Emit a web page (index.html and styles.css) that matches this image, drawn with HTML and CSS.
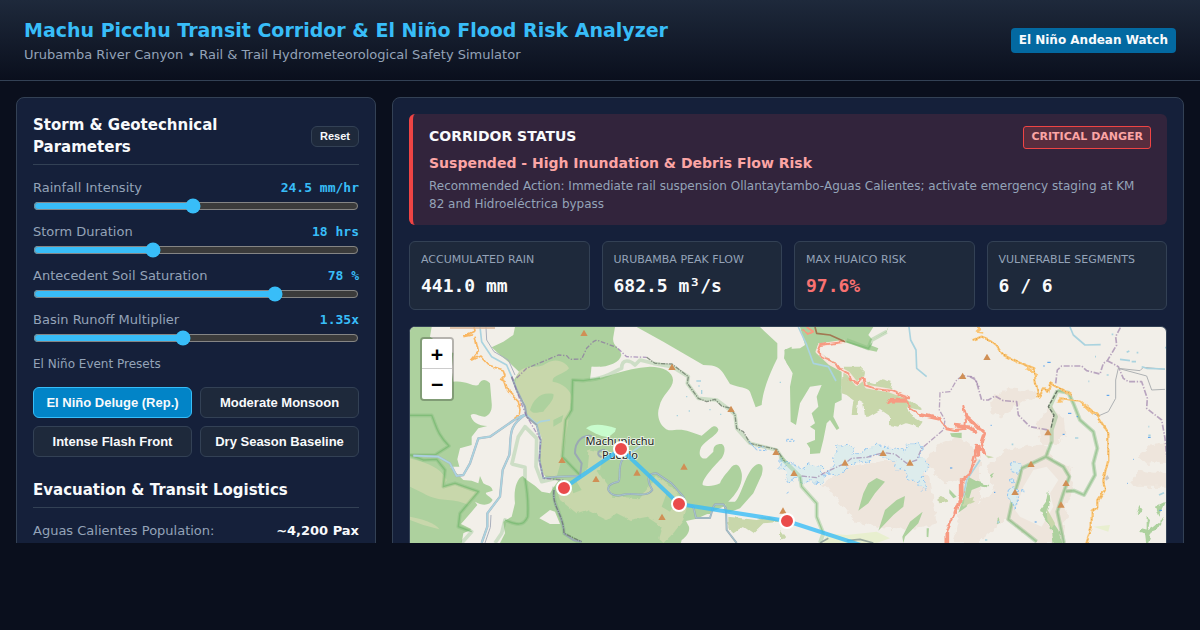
FILE: index.html
```html
<!DOCTYPE html>
<html lang="en">
<head>
<meta charset="utf-8">
<meta name="viewport" content="width=device-width, initial-scale=1">
<title>Machu Picchu Transit Corridor &amp; El Niño Flood Risk Analyzer</title>
<link rel="stylesheet" href="styles.css">
</head>
<body>
<header class="header">
  <div>
    <h1 class="title">Machu Picchu Transit Corridor &amp; El Niño Flood Risk Analyzer</h1>
    <p class="subtitle">Urubamba River Canyon • Rail &amp; Trail Hydrometeorological Safety Simulator</p>
  </div>
  <span class="watch">El Niño Andean Watch</span>
</header>
<main class="main">
  <section class="panel">
    <div class="panel-head">
      <h2 class="heading">Storm &amp; Geotechnical Parameters</h2>
      <button class="btn btn-small" type="button">Reset</button>
    </div>
    <div class="field">
      <div class="field-top"><label for="rain">Rainfall Intensity</label><output class="value" for="rain">24.5 mm/hr</output></div>
      <input class="slider" id="rain" type="range" min="0" max="50" step="0.5" value="24.5">
    </div>
    <div class="field">
      <div class="field-top"><label for="duration">Storm Duration</label><output class="value" for="duration">18 hrs</output></div>
      <input class="slider" id="duration" type="range" min="1" max="48" value="18">
    </div>
    <div class="field">
      <div class="field-top"><label for="soil">Antecedent Soil Saturation</label><output class="value" for="soil">78 %</output></div>
      <input class="slider" id="soil" type="range" min="10" max="100" value="78">
    </div>
    <div class="field">
      <div class="field-top"><label for="runoff">Basin Runoff Multiplier</label><output class="value" for="runoff">1.35x</output></div>
      <input class="slider" id="runoff" type="range" min="0.8" max="2" step="0.05" value="1.35">
    </div>
    <p class="preset-label">El Niño Event Presets</p>
    <div class="presets">
      <button class="btn btn-active" type="button">El Niño Deluge (Rep.)</button>
      <button class="btn" type="button">Moderate Monsoon</button>
      <button class="btn" type="button">Intense Flash Front</button>
      <button class="btn" type="button">Dry Season Baseline</button>
    </div>
    <div class="panel-head">
      <h2 class="heading">Evacuation &amp; Transit Logistics</h2>
    </div>
    <div class="fact"><span>Aguas Calientes Population:</span><strong class="fact-value">~4,200 Pax</strong></div>
  </section>

  <section class="panel">
    <div class="alert">
      <div class="alert-top"><h2 class="alert-label">CORRIDOR STATUS</h2><span class="danger">CRITICAL DANGER</span></div>
      <p class="alert-title">Suspended - High Inundation &amp; Debris Flow Risk</p>
      <p class="alert-text">Recommended Action: Immediate rail suspension Ollantaytambo-Aguas Calientes; activate emergency staging at KM 82 and Hidroeléctrica bypass</p>
    </div>
    <div class="stats">
      <div class="stat"><div class="stat-label">ACCUMULATED RAIN</div><div class="stat-value">441.0 mm</div></div>
      <div class="stat"><div class="stat-label">URUBAMBA PEAK FLOW</div><div class="stat-value">682.5 m³/s</div></div>
      <div class="stat"><div class="stat-label">MAX HUAICO RISK</div><div class="stat-value stat-high">97.6%</div></div>
      <div class="stat"><div class="stat-label">VULNERABLE SEGMENTS</div><div class="stat-value">6 / 6</div></div>
    </div>
    <div class="map">
      <svg class="map-art" viewBox="410 327 756 350" role="img" aria-label="Corridor map">
        <defs>
          <path id="peak" d="M0-11 11 8H-11Z" fill="#d08f55"/>
          <filter id="rough" x="-5%" y="-5%" width="110%" height="110%"><feTurbulence type="fractalNoise" baseFrequency=".05" numOctaves="2" seed="4"/><feDisplacementMap in="SourceGraphic" scale="28" xChannelSelector="R" yChannelSelector="G"/></filter>
          <filter id="wobble" x="-5%" y="-5%" width="110%" height="110%"><feTurbulence type="fractalNoise" baseFrequency=".04" numOctaves="2" seed="8"/><feDisplacementMap in="SourceGraphic" scale="14" xChannelSelector="R" yChannelSelector="G"/></filter>
        </defs>
        <g transform="translate(400 320) scale(.33333)" fill="none" stroke-linejoin="round">
          <!-- western canyon -->
          <path fill="#add19e" d="M0 0H1250V1100H0Z"/>
          <g>
            <path fill="#c8d7ab" d="M355 155C390 130 410 150 440 130 470 110 500 130 507 145 490 165 455 165 458 185 490 190 520 215 514 240L490 400 470 470 425 465 420 360 385 290 345 190ZM30 415C80 430 120 440 140 480L130 500 165 490 235 515 205 555C150 530 120 550 70 520L30 500ZM30 590C90 600 115 620 118 628L70 615 30 600Z"/>
            <path filter="url(#wobble)" fill="#c8d7ab" d="M470 510 530 480 570 440 590 450 625 500 640 530 720 535 770 470 815 500 860 560 850 600 820 640 790 669 775 655 785 620 740 590 690 600 650 580 620 600 560 570 530 580 480 540ZM565 390 610 400 600 450 560 450Z"/>
            <path fill="#add19e" d="M390 270C400 240 420 215 460 222 465 240 440 260 430 275 415 275 400 285 390 270ZM460 300 490 285 485 305 460 320ZM510 490 530 485 545 510 520 520ZM800 520 830 540 810 575 785 560Z"/>
            <path fill="#f2efe9" d="M95 21H345L340 45 310 65 275 82 300 105 330 130 357 155 342 180 350 210 372 245 380 285 410 310 425 355 417 400 425 455 440 475 475 482 462 500 450 520 425 515 405 497 380 480 368 468C350 475 340 510 345 550L335 590 310 605 315 640 300 669H185L190 640 215 628 183 612 215 575 232 555 225 545C250 560 270 555 278 540 270 528 255 525 258 518L278 512C275 495 260 498 250 490L240 468 235 490 215 482 190 480 150 440 178 440 172 418 180 385 215 375 215 350 235 325 262 318C235 318 215 305 212 285 225 275 240 292 255 290 270 285 277 270 275 250L270 190C250 170 240 185 235 195 220 202 200 180 160 185L155 150 160 100 90 50ZM418 595 450 570 465 575 480 612 450 612ZM575 140H600V170L575 165Z"/>
            <path fill="#f2efe9" transform="translate(570)" d="M75 21H140L220 65 340 135C380 135 390 145 400 160L420 192C450 205 470 200 480 215L497 262 515 255C518 220 530 180 562 115V70L510 21H720V700H265L275 660C290 650 300 635 297 620L288 603 320 596 400 560 415 545C440 520 460 490 455 460 450 430 435 430 425 440 405 465 395 475 390 490 370 500 350 500 338 495 335 480 370 440 395 415 408 395 405 375 395 372 375 372 370 380 370 395L350 415C330 420 325 400 332 385 340 365 385 345 385 328 380 315 370 318 365 322L335 347 300 335C260 320 240 340 225 325 205 310 200 280 208 260 215 225 250 205 249 180 248 155 220 140 180 140 100 145 50 175 0 178L5 140C45 145 90 130 94 105 90 80 65 80 70 50Z"/>
            <path fill="#add19e" transform="translate(570)" d="M410 545 435 545C455 530 470 440 505 432 520 432 520 445 515 465L490 520 450 565 415 578 400 570ZM583 90 605 80V150L590 130ZM313 560 365 560 360 582 325 583Z"/>
            <path filter="url(#wobble)" fill="#c8d7ab" d="M985 590 1070 600 1110 590 1140 605 1090 610 1060 640 1030 620 1000 640 985 625Z"/>
            <path fill="#c8fccd" d="M558 325C575 310 610 312 648 325L645 335 625 352 605 348 585 340Z"/>
          </g>
          <!-- parkland edges -->
          <path stroke="#6fb56a" stroke-opacity=".28" stroke-width="11" d="M30 286H95C110 320 110 340 147 378L105 405 30 405 70 420 110 418 135 450 130 500 165 490 235 515 180 580 175 620 215 635 185 669M335 435 355 350 375 320 410 355 408 440 425 485 470 475M335 432 375 442 375 475C385 530 385 560 383 590 370 620 350 615 315 600L305 640 285 669M600 174 550 182 518 180 515 270 497 300 487 410 540 465M570 180C620 175 650 150 665 145 665 115 690 120 705 135L720 120 760 130 816 140 865 170 862 190 895 235 950 240 990 270 1005 285 1010 325 1050 370 1130 390 1165 440M462 500C455 560 490 580 492 640L540 669"/>
          <path stroke="#6fb56a" stroke-opacity=".6" stroke-width="4" d="M30 286H95C110 320 110 340 147 378L105 405 30 405 70 420 110 418 135 450 130 500 165 490 235 515 180 580 175 620 215 635M600 174 550 182 518 180 515 270 497 300 487 410 540 465M375 475C385 530 385 560 383 590 370 620 350 615 315 600"/>
          <!-- rivers and railway -->
          <path stroke="#aab0bd" stroke-width="7" d="M378 283 350 295 270 350 235 355 210 430 190 465 170 468 150 430 115 410 40 407M378 283C320 320 335 350 328 405L308 450 300 530 262 580 262 620 245 669"/>
          <path stroke="#aab0bd" stroke-width="3" d="M258 21 260 60 282 95 325 120 345 165M273 585 271 622 255 669"/>
          <path stroke="#aad3df" stroke-width="5" d="M240 21 245 65 275 110 320 135 335 170 350 210 375 260 378 283 410 312M378 283 350 295 270 350 235 355 210 430 190 465 170 468 150 430 115 410 40 407M378 283C320 320 335 350 328 405L308 450 300 530 262 580 262 620 245 669M410 312 420 305 450 300M690 400 725 375"/>
          <path stroke="#9aa9b3" stroke-width="6" d="M335 170 350 210 375 260 380 290 410 315 422 360 418 420 430 475 470 470 540 468 545 430 525 400C525 360 550 345 575 348M615 390C590 390 590 405 605 412M670 415C650 440 665 475 655 485 600 495 630 535 665 525 700 515 740 535 757 510 740 480 740 460 770 460L815 490 850 530 860 555 880 560 888 594 930 594 940 560 945 553H970L978 565 980 630 1010 669M462 510C455 560 490 580 492 640L520 660 545 665"/>
          <path stroke="#aad3df" stroke-width="2" d="M670 415C650 440 665 475 655 485 600 495 630 535 665 525 700 515 740 535 757 510 740 480 740 460 770 460L815 490 850 530 860 555 880 560 888 594 930 594 940 560 945 553H970L978 565 980 630 1010 669M410 315 422 360 418 420 430 475 470 470 540 468"/>
          <path stroke="#8461a2" stroke-opacity=".6" stroke-width="4" stroke-dasharray="14 5 4 5" d="M335 170 360 240 378 285 422 360 418 420 430 475 490 480M350 174 380 145 440 120 475 105 500 107 510 118 545 117 560 85 580 65 590 60 650 82 680 110 740 112"/>
          <path stroke="#687566" stroke-opacity=".75" stroke-width="4" stroke-dasharray="14 3 4 3" d="M740 112 765 130 816 132 865 170 862 190 895 235 920 245 945 238 965 258 993 265 1005 285 1010 325 1030 335 1050 370 1130 388 1160 435 1185 460M462 510C455 560 490 580 492 640L545 665"/>
          <path filter="url(#wobble)" stroke="#f9b763" stroke-width="5" d="M190 50 215 45 192 48 225 32 222 21M225 50 235 95 215 120 240 108 265 135 310 150 315 165 302 178 315 185 325 215 355 245 360 270 358 285 340 292"/>
          <path stroke="#d9b596" stroke-width="5" d="M150 24H285"/>

          <!-- central highlands -->
          <g transform="translate(1140)">
            <path filter="url(#rough)" fill="#eee5dc" d="M130 490 190 440 270 430 330 420 390 440 450 470 470 610 380 630 310 625 220 600 180 550ZM430 430 480 370 540 350 600 400V669H520L560 480 500 490Z"/>
            <path fill="#add19e" d="M60 21H325L320 35 275 60 270 75 295 85 290 95 265 90 200 68 115 70 110 90 185 145 185 240 165 250 160 290 178 325 170 330 150 300 140 310 130 360 120 400 90 402 90 385 80 370 105 360 105 330 90 320 105 310 95 280 115 260 110 230 125 195 90 200 60 250 48 315 32 305 30 200 38 160 12 115 15 88 60 85 75 75ZM290 474 315 485 285 520 265 550 235 572 250 520 265 490ZM375 528 370 560 340 585 295 632 315 570 350 540ZM428 575 415 610 375 650 370 669 367 650 390 605ZM510 340 545 338 545 355 515 350ZM508 508 530 530 520 535 508 520ZM565 470 600 490 600 500 575 510 560 560 535 578 555 520ZM440 625 447 625 445 652 440 650Z"/>
            <path fill="#f2efe9" d="M280 21 325 21 318 35 278 60 265 45Z"/>
            <path filter="url(#wobble)" fill="#c8d7ab" d="M188 140 240 140 255 155 250 180 285 190 305 178 335 185 330 210 380 235 425 265 420 270 380 260 390 285 425 305 415 320 380 310 355 320 330 315 330 290 300 270 265 290 255 290 250 250 235 240 230 285 215 285 220 240 200 225 185 220ZM468 540 485 525 505 545 480 550ZM555 525 585 545 550 560ZM0 630 15 650 0 660Z"/>
            <path fill="#e8efcf" d="M140 640 200 645 290 635 330 655 290 669H130Z"/>
            <path filter="url(#rough)" fill="#ddecec" stroke="#91c5f2" stroke-width="3" stroke-dasharray="9 6" d="M0 415 30 430 65 445 85 432 120 435 130 460 155 455 165 430 158 410 172 400 168 380 205 370 218 385 215 405 240 400 270 385 290 372 305 378 350 385 370 395 385 375 415 368 425 390 420 410 450 435 432 460 430 470 442 510 425 510 415 482 385 480 380 460 350 440 330 412 300 410 265 415 265 430 240 422 200 434 195 458 175 465 130 462 125 490 95 485 60 490 45 475 20 490 25 460 0 440Z"/>
            <path stroke="#91c5f2" stroke-width="3" stroke-dasharray="7 5" d="M20 358H42V364H20ZM20 520 28 515M-93 365-75 385-50 380-40 392-70 390ZM15 440 30 425 50 440"/>
            <path stroke="#6fb56a" stroke-opacity=".3" stroke-width="12" d="M0 410 30 440 60 470 65 500 110 550 110 590 130 640 120 669M200 60 265 85 275 60 320 35"/>
            <path stroke="#6fb56a" stroke-opacity=".5" stroke-width="4" d="M60 470 65 500 110 550 110 590 130 640M200 65 265 85 275 70"/>
            <path stroke="#aad3df" stroke-width="5" d="M55 21 78 70 100 130 145 140 168 183M387 21 392 60 408 90 410 145 440 170M600 420 560 480 550 530"/>
            <path stroke="#a084ac" stroke-opacity=".7" stroke-width="4" stroke-dasharray="16 5 4 5" d="M65 468 110 473 130 460 195 430 215 415 260 412 310 398 345 402 380 430 410 420 425 385 490 330 495 300 478 270 480 218 510 215 530 180 548 167 580 170 600 205"/>
            <path stroke="#f8e4dc" stroke-width="11" d="M195 65 120 75 112 95 150 130 205 160 230 192 250 175 260 200 330 212 390 235"/>
            <g filter="url(#wobble)" stroke="#f79a82">
              <path stroke-width="6" d="M65 30 85 42 100 35 80 21M195 65 120 75 112 95 125 110 165 128 175 145 205 160 210 180 230 192 250 172 255 195 290 208 330 212 390 235 330 237 325 250 335 240 385 243 390 265 425 285 480 297 500 325 525 330 560 325 590 338M555 330 558 300 550 258 560 290 600 330M525 315 560 320 590 335M600 375 585 400 590 420 565 465 545 480 545 530 520 590 502 630 502 680"/>
              <path stroke-width="11" d="M328 242 385 243M425 285 480 297M545 475 545 525 525 580M502 635V680M525 317 570 322M595 375 595 410"/>
            </g>
            <path stroke="#a27852" stroke-width="5" d="M105 21 110 40 150 45 195 65"/>
            <path stroke="#9aa9a0" stroke-width="5" d="M120 669 145 655M200 662 240 658 280 669"/>
          </g>

          <!-- eastern ranges -->
          <g transform="translate(1710)">
            <path filter="url(#rough)" fill="#eee5dc" d="M60 240 110 205 190 210 210 225 130 260 100 290 65 280ZM200 310 240 260 285 300 290 350 250 375 210 365ZM50 440 110 390 220 370 250 420 300 440 315 500 290 560 280 669H200L110 600 30 660 0 650V560L70 520ZM500 410 540 375 600 370V425L530 435ZM480 490 510 450 600 460V500L500 500Z"/>
            <path fill="#f2efe9" d="M160 500 190 450 230 440 265 480 240 520 250 560 215 620 150 590 135 570Z"/>
            <path filter="url(#wobble)" fill="#add19e" d="M0 480 55 495 50 502 0 495ZM235 508 238 550 228 575 265 630 280 680H252L245 630 222 595 210 570 228 545ZM508 555 518 570 500 580ZM530 590 540 600 530 650ZM555 560 585 545 565 590ZM515 625 535 630 550 620 585 590 560 630 545 635 530 680 525 640 505 635ZM60 465 75 458 65 475ZM85 590 90 605 80 610Z"/>
            <path fill="#c8d7ab" d="M230 565 255 610 245 625 232 600ZM45 405 72 412 55 415ZM0 535 12 530 5 550Z"/>
            <path fill="#e8efcf" d="M370 620 420 615 415 635Z"/>
            <path stroke="#5ca85a" stroke-opacity=".3" stroke-width="12" d="M262 212 295 218 310 250 330 300 370 335 382 385 370 430 375 465 342 525 312 512 288 514M262 212 240 260 258 290 245 330 245 365 228 410 155 445 148 475 130 530 115 598 200 665M228 410 280 440 298 470 280 520 262 575 282 669"/>
            <path stroke="#5ca85a" stroke-opacity=".35" stroke-width="5" d="M262 212 295 218 310 250 330 300 370 335 382 385 370 430 375 465 342 525 312 512 288 514M245 365 228 410 155 445 148 475 130 530 115 598 200 665M228 410 280 440 298 470 280 520 262 575 282 669"/>
            <path stroke="#687566" stroke-width="4" stroke-dasharray="12 4" d="M262 212 235 260 252 285 243 325"/>
            <path filter="url(#wobble)" fill="#ddecec" stroke="#91c5f2" stroke-width="3" stroke-dasharray="8 5" d="M118 430 135 425 155 438 145 460 125 455ZM122 477H134V488H122ZM115 510 130 500 145 510 145 550 135 568 125 545 112 530ZM155 512H165V518H155Z"/>
            <path stroke="#a084ac" stroke-opacity=".7" stroke-width="5" stroke-dasharray="18 5 4 5" d="M0 170 18 180 35 240 55 240 75 228 100 242 140 245 145 285 180 320 235 330M257 190 262 150 275 138 335 138 350 152 390 162 400 130 412 122 440 75 437 50 452 21M412 122 445 140 460 175 475 185 515 185 532 235 530 265 575 300 585 355 590 410"/>
            <path stroke="#aeb1b3" stroke-width="3" d="M585 148 520 142 510 152 445 145 437 180 437 235 415 275 385 288 370 280M445 145 530 168 545 210 585 208"/>
            <path stroke="#aad3df" stroke-width="5" d="M300 21 310 45 345 75 392 74M515 140 530 145 585 147M450 118 480 122M485 125H498M375 110H378M410 165H416M535 346H542M355 184H358M567 525 582 518M470 97 478 93M315 354H325M425 43H430M500 98H505M585 83H592M535 320H538M125 373H130M85 603V610M45 660H52"/>
            <path stroke="#4499ee" stroke-width="3" d="M232 127H242M220 138H224M410 226H418M294 280H304M320 290H324M278 343H284M194 606H200M568 571H576M62 316H65M72 517H76M534 352H542M-60 444H-53M472 490H474M490 418H492"/>
            <path filter="url(#wobble)" stroke="#fbc573" stroke-width="7" d="M8 60 35 50 60 60 80 75 100 105 140 125 190 145 198 190 205 230 225 205 235 218 240 190 305 225M262 245 270 235 330 242 380 285 415 340 415 420 400 480 405 510 385 540 385 560 365 575 365 620 345 680M15 15 30 25 20 35 40 38M170 145 200 165M345 260 370 285M262 245H275"/>
            <path filter="url(#wobble)" stroke="#c88630" stroke-width="2" stroke-dasharray="3 7" d="M8 60 35 50 60 60 80 75 100 105 140 125 190 145 198 190 205 230 225 205 235 218 240 190 305 225M262 245 270 235 330 242 380 285 415 340 415 420 400 480 405 510 385 540 385 560 365 575 365 620 345 680"/>
            <path filter="url(#wobble)" stroke="#f79a82" stroke-width="7" d="M-15 285 0 298 45 340 35 370 45 402 20 375 15 405 0 460M0 320 20 340M0 325 -20 315"/>
            <path fill="#c8c8c8" d="M405 475 412 465 418 475 408 482Z"/>
          </g>
          <path stroke="#aad3df" stroke-width="4" d="M889 183H903M895 198H899M905 210V222M858 230H862M866 273H870M830 287H834M928 269H932M960 283H964M1139 187H1143"/>

          <use href="#peak" x="552" y="40"/><use href="#peak" x="486" y="421"/><use href="#peak" x="588" y="478"/><use href="#peak" x="816" y="142"/><use href="#peak" x="993" y="268"/><use href="#peak" x="1128" y="397"/><use href="#peak" x="852" y="441"/><use href="#peak" x="711" y="459"/><use href="#peak" x="786" y="592"/><use href="#peak" x="1149" y="573"/><use href="#peak" x="1182" y="460"/><use href="#peak" x="1335" y="429"/><use href="#peak" x="1449" y="400"/><use href="#peak" x="1530" y="429"/><use href="#peak" x="1688" y="169"/><use href="#peak" x="1761" y="112"/><use href="#peak" x="1944" y="338"/><use href="#peak" x="1893" y="433"/><use href="#peak" x="1845" y="517"/><use href="#peak" x="1998" y="490"/><use href="#peak" x="1983" y="555"/>
        </g>
        <g class="place" text-anchor="middle"><text x="620" y="445">Machupicchu</text><text x="620" y="459">Pueblo</text></g>
        <path d="M564 488 621 449 679 504 787 521 873 549 960 590" fill="none" stroke="#38bdf8" stroke-width="4" stroke-opacity=".8" stroke-linejoin="round"/>
        <g fill="#ea4b4b" stroke="#fff" stroke-width="2"><circle cx="564" cy="488" r="7"/><circle cx="621" cy="449" r="7"/><circle cx="679" cy="504" r="7"/><circle cx="787" cy="521" r="7"/></g>
      </svg>
      <div class="zoom">
        <button class="zoom-btn" type="button" aria-label="Zoom in">+</button>
        <button class="zoom-btn" type="button" aria-label="Zoom out">−</button>
      </div>
    </div>
  </section>
</main>
</body>
</html>
```
FILE: styles.css
```css
* { box-sizing: border-box; }

body {
  margin: 0;
  height: 100vh;
  padding-bottom: 87px;
  display: flex;
  flex-direction: column;
  overflow: hidden;
  background: #0a0f1d;
  color: #f8fafc;
  font: 13px/18px "DejaVu Sans", sans-serif;
}

h1, h2, p { margin: 0; }

.header {
  display: flex;
  justify-content: space-between;
  align-items: center;
  padding: 16px 24px;
  border-bottom: 1px solid #334155;
  background: linear-gradient(180deg, #1e293b, #0a0f1d);
}

.title { font-size: 19px; line-height: 28px; color: #38bdf8; }
.subtitle { margin-top: 2px; color: #94a3b8; }

.watch {
  padding: 4px 8px;
  border-radius: 4px;
  background: #0369a1;
  font-size: 12px;
  line-height: 17px;
  font-weight: bold;
}

.main {
  flex: 1;
  min-height: 0;
  display: grid;
  grid-template-columns: 360px minmax(0, 1fr);
  align-items: start;
  gap: 16px;
  padding: 16px 16px 0;
  overflow: hidden;
}

.panel {
  min-height: 600px;
  padding: 16px;
  border: 1px solid #334155;
  border-radius: 8px;
  background: #15203a;
}

.panel-head {
  display: flex;
  justify-content: space-between;
  align-items: center;
  gap: 16px;
  padding-bottom: 6px;
  margin-bottom: 14px;
  border-bottom: 1px solid #334155;
}

.heading { font-size: 15px; line-height: 22px; }

.btn {
  padding: 7px 8px;
  border: 1px solid #334155;
  border-radius: 6px;
  background: #1e293b;
  color: #f8fafc;
  font: bold 13px/15px "Liberation Sans", sans-serif;
}
.btn-small { padding: 3px 8px; font-size: 11px; line-height: 13px; }
.btn-active { background: #0284c7; border-color: #38bdf8; }

.field { margin-bottom: 9px; color: #94a3b8; }
.field-top { display: flex; justify-content: space-between; }
.value {
  color: #38bdf8;
  font-family: "DejaVu Sans Mono", monospace;
  font-size: 13px;
  font-weight: bold;
}
.slider {
  display: block;
  width: 100%;
  height: 16px;
  margin: 1px 0 0;
  accent-color: #38bdf8;
}

.preset-label { margin-top: 9px; font-size: 12px; color: #94a3b8; }
.presets {
  display: grid;
  grid-template-columns: 1fr 1fr;
  gap: 8px;
  margin: 14px 0 22px;
}

.fact { display: flex; justify-content: space-between; color: #94a3b8; }
.fact-value { color: #f8fafc; }

.alert {
  padding: 12px 16px;
  border-left: 4px solid #ef4444;
  border-radius: 6px;
  background: #32243c;
}
.alert-top { display: flex; justify-content: space-between; align-items: flex-start; }
.alert-label { font-size: 14px; line-height: 20px; }
.danger {
  padding: 2px 7px 4px;
  border: 1px solid #ef4444;
  border-radius: 3px;
  background: #582d3e;
  color: #fca5a5;
  font-size: 11px;
  line-height: 15px;
  font-weight: bold;
}
.alert-title {
  margin: 4px 0;
  font-size: 14px;
  line-height: 20px;
  font-weight: bold;
  color: #fca5a5;
}
.alert-text { font-size: 12px; color: #94a3b8; }

.stats {
  display: grid;
  grid-template-columns: repeat(4, 1fr);
  gap: 12px;
  margin: 16px 0;
}
.stat {
  padding: 10px 11px;
  border: 1px solid #334155;
  border-radius: 6px;
  background: #1e293b;
}
.stat-label { font-size: 11px; line-height: 15px; color: #94a3b8; }
.stat-value {
  margin-top: 6px;
  font: bold 18px/26px "DejaVu Sans Mono", monospace;
}
.stat-high { color: #f87171; }

.map {
  position: relative;
  overflow: hidden;
  border: 1px solid #334155;
  border-radius: 6px;
  background: #f2efe9;
}
.map-art { display: block; width: 100%; }
.place {
  font: 11px "Noto Sans", sans-serif;
  fill: #222;
  stroke: rgba(255, 255, 255, .7);
  stroke-width: 2px;
  paint-order: stroke;
}

.zoom {
  position: absolute;
  top: 10px;
  left: 10px;
  border: 2px solid rgba(0, 0, 0, .25);
  border-radius: 4px;
  background-clip: padding-box;
}
.zoom-btn {
  display: block;
  width: 30px;
  height: 30px;
  padding: 0;
  border: 0;
  background: #fff;
  color: #000;
  font: bold 20px/30px "DejaVu Sans Mono", monospace;
}
.zoom-btn:first-child { border-bottom: 1px solid #ccc; border-radius: 2px 2px 0 0; }
.zoom-btn:last-child { border-radius: 0 0 2px 2px; }
```
